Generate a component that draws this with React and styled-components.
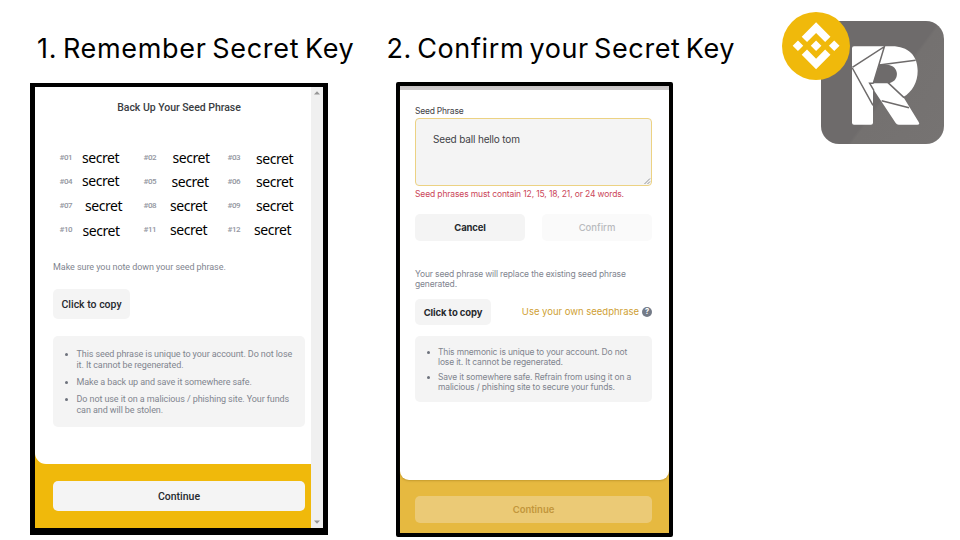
import React from "react";
import styled, { createGlobalStyle } from "styled-components";

const GlobalStyle = createGlobalStyle`
  * { box-sizing: border-box; }
  body { margin: 0; background: #fff; overflow: hidden; }
  ul, h1, h2, p { margin: 0; padding: 0; font-weight: inherit; }
`;

const Slide = styled.main`
  width: 960px;
  height: 540px;
  display: flex;
  background: #fff;
  font-family: "Roboto", sans-serif;
  white-space: nowrap;
`;

const Step = styled.section`
  width: ${(p) => p.$width}px;
  padding: ${(p) => p.$pad};
  flex: none;
`;

const StepTitle = styled.h1`
  height: ${(p) => p.$height}px;
  margin-left: ${(p) => p.$indent}px;
  font: 400 27px/36px "Inter", sans-serif;
  letter-spacing: ${(p) => p.$track}px;
  word-spacing: ${(p) => p.$gap}px;
  color: #000;
`;

const Device = styled.div`
  display: flex;
  width: ${(p) => p.$width}px;
  height: ${(p) => p.$height}px;
  border: solid #000;
  border-width: ${(p) => p.$border};
  border-radius: ${(p) => p.$radius || 0}px;
  background: ${(p) => p.$bg};
  font-family: ${(p) => p.$font}, sans-serif;
`;

const Screen = styled.div`
  flex: 1;
  display: flex;
  flex-direction: column;
`;

const Sheet = styled.div`
  height: ${(p) => p.$height}px;
  padding: ${(p) => p.$pad};
  border-radius: ${(p) => p.$radius};
  background: #fff;
  box-shadow: ${(p) => p.$shadow || "none"};
`;

const Scrollbar = styled.div`
  width: 12.5px;
  display: flex;
  flex-direction: column;
  justify-content: space-between;
  align-items: center;
  padding: 4px 0;
  background: #f0f0f0;
  svg { display: block; }
`;

const ScreenTitle = styled.h2`
  font-size: 10.5px;
  font-weight: 500;
  line-height: 14px;
  letter-spacing: -0.03px;
  text-align: center;
  color: #3a3d42;
`;

const WordGrid = styled.div`
  display: grid;
  grid-template-columns: repeat(3, 84px);
  grid-auto-rows: 24.3px;
  margin-top: 30.5px;
`;

const WordCell = styled.div`
  display: flex;
  padding-left: 6.5px;
`;

const WordIndex = styled.span`
  width: 16px;
  font-size: 8px;
  font-weight: 500;
  line-height: 24px;
  letter-spacing: -0.4px;
  color: #9396a0;
`;

const Word = styled.span`
  margin: ${(p) => p.$dy}px 0 0 ${(p) => p.$dx}px;
  font: 400 14px/24px "Noto Sans", sans-serif;
  letter-spacing: -0.45px;
  color: #000;
`;

const Note = styled.p`
  margin-top: ${(p) => p.$top}px;
  font-size: ${(p) => p.$size}px;
  line-height: ${(p) => p.$line}px;
  letter-spacing: ${(p) => p.$track}px;
  color: #81858f;
`;

const Button = styled.button`
  display: flex;
  align-items: center;
  justify-content: center;
  padding: ${(p) => p.$drop || 0}px 0 0;
  border: 0;
  width: ${(p) => p.$width}px;
  height: ${(p) => p.$height}px;
  margin-top: ${(p) => p.$top || 0}px;
  border-radius: 5px;
  background: ${(p) => p.$bg || "#f4f4f4"};
  color: ${(p) => p.$color || "#26292e"};
  font-family: inherit;
  font-size: ${(p) => p.$size}px;
  font-weight: ${(p) => p.$weight || 500};
  letter-spacing: ${(p) => p.$track || 0}px;
`;

const Notice = styled.ul`
  display: flex;
  flex-direction: column;
  gap: ${(p) => p.$gap}px;
  height: ${(p) => p.$height}px;
  margin-top: ${(p) => p.$top}px;
  padding: ${(p) => p.$pad};
  border-radius: 5px;
  background: #f4f4f4;
  list-style: none;
  font-size: ${(p) => p.$size}px;
  line-height: ${(p) => p.$line}px;
  letter-spacing: ${(p) => p.$track}px;
  color: #81858f;
`;

const NoticeItem = styled.li`
  display: flex;
  &::before {
    content: "";
    flex: none;
    width: 3px;
    height: 3px;
    margin: 4px ${(p) => p.$gap}px 0 0;
    border-radius: 50%;
    background: #6d727c;
  }
`;

const Footer = styled.div`
  flex: 1;
  padding: ${(p) => p.$pad};
`;

const StatusStrip = styled.div`
  height: 4px;
  background: linear-gradient(#c6c2c3, #d3d0d1);
`;

const FieldLabel = styled.label`
  display: block;
  font-size: 8.5px;
  line-height: 12px;
  letter-spacing: -0.22px;
  color: #3f4247;
`;

const Field = styled.div`
  display: flex;
  justify-content: space-between;
  align-items: flex-end;
  height: 68px;
  margin-top: 1px;
  border: 1px solid #ecd283;
  border-radius: 4px;
  background: #f4f4f4;
  svg { display: block; }
`;

const FieldText = styled.span`
  align-self: flex-start;
  padding: 13px 0 0 17px;
  font-size: 10px;
  line-height: 14px;
  letter-spacing: -0.16px;
  color: #3f4247;
`;

const FieldError = styled.p`
  margin-top: 2px;
  font-size: 8.5px;
  line-height: 12px;
  letter-spacing: -0.13px;
  color: #cb4659;
`;

const SplitRow = styled.div`
  display: flex;
  align-items: center;
  justify-content: space-between;
  margin-top: ${(p) => p.$top}px;
`;

const OwnPhrase = styled.span`
  display: flex;
  align-items: center;
  gap: 3px;
  font-size: 9.5px;
  letter-spacing: -0.01px;
  color: #cf9f35;
`;

const HelpBadge = styled.span`
  width: 10px;
  height: 10px;
  border-radius: 50%;
  background: #747b88;
  color: #fff;
  font-size: 7.5px;
  font-weight: 700;
  line-height: 10px;
  letter-spacing: 0;
  text-align: center;
`;

const LogoArea = styled.aside`
  flex: 1;
  svg { display: block; margin-left: auto; }
`;

const WORDS = [
  ["#01", 6.5, 0], ["#02", 13, 0], ["#03", 12.5, 1],
  ["#04", 6.5, -1], ["#05", 12, 0], ["#06", 12.5, 0],
  ["#07", 9.5, 0], ["#08", 10.5, 0], ["#09", 12.5, 0],
  ["#10", 7, 1], ["#11", 10.5, 0], ["#12", 10.5, 0],
];

function Arrow({ down }) {
  return (
    <svg width="6" height="4" viewBox="0 0 6 4">
      <path d={down ? "M0 0.5H6L3 3.7Z" : "M0 3.5H6L3 0.3Z"} fill="#969696" />
    </svg>
  );
}

function Logos() {
  return (
    <svg width="190" height="150" viewBox="0 0 570 450">
      <defs>
        <linearGradient id="tile" gradientUnits="userSpaceOnUse" x1="195" y1="125" x2="545" y2="385">
          <stop offset="0.49" stopColor="#6e6b6b" />
          <stop offset="0.51" stopColor="#747170" />
          <stop offset="1" stopColor="#767372" />
        </linearGradient>
      </defs>
      <rect x="153" y="63" width="369" height="369" rx="54" fill="url(#tile)" />
      <path
        fill="#fff"
        d="M252 139H366C414 139 443 166 443 212C443 247 427 275 400 291L446 366Q451 374 442 374H386Q380 374 377 369L309 266V368Q309 374 303 374H252Q246 374 246 368V145Q246 139 252 139Z"
      />
      <path fill="#6e6b6b" d="M328 194L309 250H350C391 249 391 195 350 194Z" />
      <path
        fill="none"
        stroke="#6e6b6b"
        strokeWidth="4.5"
        d="M247 202L343 140L310 250M247 204L309 316M327 195L437 181M354 248L402 293M310 250H299L312 272M335 302L417 323"
      />
      <circle cx="138" cy="138" r="102" fill="#f0b90b" />
      <path
        transform="translate(68 67) scale(5.86)"
        fill="#fff"
        d="M16.624 13.9202l2.7175 2.7154-7.353 7.353-7.353-7.352 2.7175-2.7164 4.6355 4.6595 4.6356-4.6595zm4.6366-4.6366L24 12l-2.7154 2.7164L18.5682 12l2.6924-2.7164zm-9.272.001l2.7163 2.6914-2.7164 2.7174v-.001L9.2721 12l2.7164-2.7154zm-9.2722-.001L5.4088 12l-2.6914 2.6924L0 12l2.7164-2.7164zM11.9885.0115l7.353 7.329-2.7174 2.7154-4.6356-4.6356-4.6355 4.6595-2.7174-2.7154 7.353-7.353z"
      />
    </svg>
  );
}

function BackupScreen() {
  return (
    <Device $width={298} $height={452} $border="4px 5px 7px" $bg="#f0b90b" $font='"Roboto"'>
      <Screen>
        <Sheet $height={376.5} $pad="14px 5.5px 0 18px" $radius="0 0 0 11px">
          <ScreenTitle>Back Up Your Seed Phrase</ScreenTitle>
          <WordGrid>
            {WORDS.map(([index, dx, dy]) => (
              <WordCell key={index}>
                <WordIndex>{index}</WordIndex>
                <Word $dx={dx} $dy={dy}>secret</Word>
              </WordCell>
            ))}
          </WordGrid>
          <Note $top={18} $size={9} $line={12} $track={-0.06}>
            Make sure you note down your seed phrase.
          </Note>
          <Button $width={77} $height={29.5} $top={16.5} $size={10.5} $drop={2}>
            Click to copy
          </Button>
          <Notice $top={17.5} $height={90.7} $pad="13px 0 0 12px" $gap={6} $size={9} $line={11} $track={-0.09}>
            <NoticeItem $gap={8.5}>
              <span>This seed phrase is unique to your account. Do not lose<br />it. It cannot be regenerated.</span>
            </NoticeItem>
            <NoticeItem $gap={8.5}>
              <span>Make a back up and save it somewhere safe.</span>
            </NoticeItem>
            <NoticeItem $gap={8.5}>
              <span>Do not use it on a malicious / phishing site. Your funds<br />can and will be stolen.</span>
            </NoticeItem>
          </Notice>
        </Sheet>
        <Footer $pad="17.5px 5px 0 18px">
          <Button $width={252} $height={29.5} $size={10.5} $drop={2}>Continue</Button>
        </Footer>
      </Screen>
      <Scrollbar>
        <Arrow />
        <Arrow down />
      </Scrollbar>
    </Device>
  );
}

function ConfirmScreen() {
  return (
    <Device $width={277} $height={455} $border="4px" $radius={2} $bg="#e6b940" $font='"Inter"'>
      <Screen>
        <StatusStrip />
        <Sheet $height={390} $pad="15px 17px 0 15px" $radius="0 0 9px 9px" $shadow="0 1px 2px rgba(120, 85, 0, 0.3)">
          <FieldLabel>Seed Phrase</FieldLabel>
          <Field>
            <FieldText>Seed ball hello tom</FieldText>
            <svg width="8" height="8" viewBox="0 0 8 8">
              <path d="M1.5 7L7 1.5M4.5 7L7 4.5" stroke="#85878b" strokeWidth="0.9" />
            </svg>
          </Field>
          <FieldError>Seed phrases must contain 12, 15, 18, 21, or 24 words.</FieldError>
          <SplitRow $top={14}>
            <Button $width={110} $height={27} $size={9.5} $weight={700} $track={-0.16}>Cancel</Button>
            <Button $width={110} $height={27} $size={9.5} $bg="#fafafa" $color="#b9bbbe">Confirm</Button>
          </SplitRow>
          <Note $top={27.5} $size={8.5} $line={10} $track={-0.15}>
            Your seed phrase will replace the existing seed phrase<br />generated.
          </Note>
          <SplitRow $top={10}>
            <Button $width={76} $height={26.5} $size={9.5} $weight={700} $track={-0.1} $drop={1}>Click to copy</Button>
            <OwnPhrase>
              Use your own seedphrase
              <HelpBadge>?</HelpBadge>
            </OwnPhrase>
          </SplitRow>
          <Notice $top={10.5} $height={66} $pad="11.2px 0 0 12px" $gap={5} $size={8.5} $line={10} $track={-0.16}>
            <NoticeItem $gap={8}>
              <span>This mnemonic is unique to your account. Do not<br />lose it. It cannot be regenerated.</span>
            </NoticeItem>
            <NoticeItem $gap={8}>
              <span>Save it somewhere safe. Refrain from using it on a<br />malicious / phishing site to secure your funds.</span>
            </NoticeItem>
          </Notice>
        </Sheet>
        <Footer $pad="16px 17px 0 15px">
          <Button $width={237} $height={26.5} $size={9.5} $weight={600} $bg="#ebca76" $color="#c2963c">
            Continue
          </Button>
        </Footer>
      </Screen>
    </Device>
  );
}

export default function App() {
  return (
    <>
      <GlobalStyle />
      <Slide>
        <Step $width={366} $pad="31px 0 0 30px">
          <StepTitle $height={52} $indent={7} $track={0.68} $gap={-2.5}>1. Remember Secret Key</StepTitle>
          <BackupScreen />
        </Step>
        <Step $width={374} $pad="31px 0 0 30px">
          <StepTitle $height={51} $indent={-9.5} $track={0.62} $gap={-3}>2. Confirm your Secret Key</StepTitle>
          <ConfirmScreen />
        </Step>
        <LogoArea>
          <Logos />
        </LogoArea>
      </Slide>
    </>
  );
}
